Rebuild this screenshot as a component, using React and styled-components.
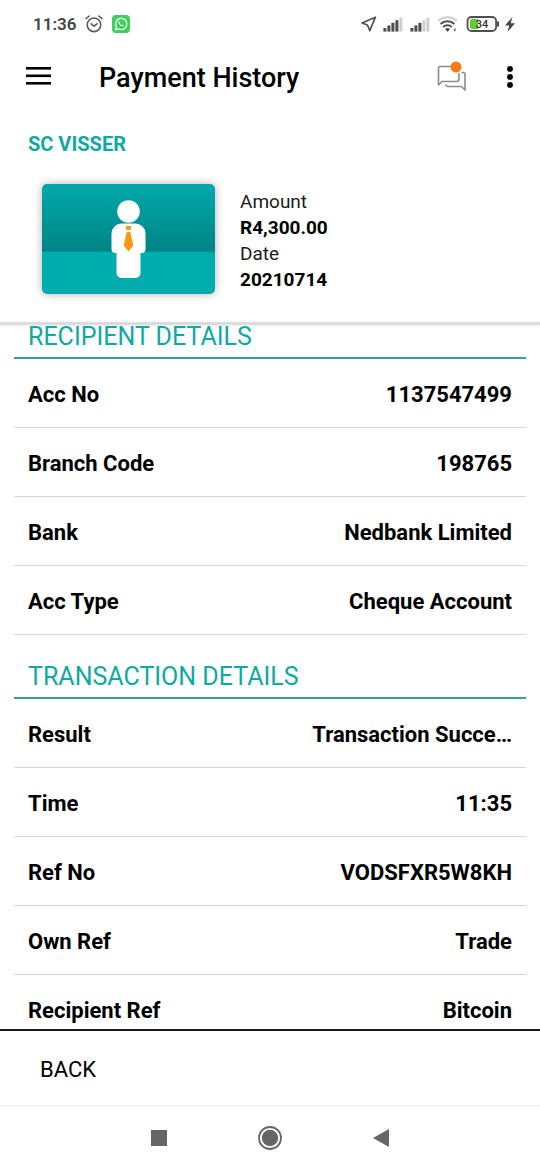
import React from "react";
import styled, { createGlobalStyle } from "styled-components";

const TEAL = "#0fa9a4";

const GlobalStyle = createGlobalStyle`
  * { box-sizing: border-box; }
  body {
    margin: 0;
    background: #fff;
    color: #000;
    font-family: Roboto, "Liberation Sans", sans-serif;
  }
  button {
    display: flex;
    align-items: center;
    margin: 0;
    padding: 0;
    border: 0;
    background: none;
    color: inherit;
    font: inherit;
  }
  svg { display: block; flex: none; }
`;

const Screen = styled.div`
  display: flex;
  flex-direction: column;
  height: 100vh;
`;

const StatusBar = styled.div`
  display: flex;
  flex: none;
  justify-content: space-between;
  align-items: center;
  height: 48px;
  padding: 0 25px 0 33px;
  color: #444;
`;

const StatusGroup = styled.div`
  display: flex;
  align-items: center;
  gap: ${(p) => p.$gap}px;
`;

const Clock = styled.span`
  font-size: 17px;
  line-height: 20px;
  font-weight: 600;
`;

const AppBar = styled.header`
  display: flex;
  flex: none;
  align-items: center;
  height: 60px;
  padding: 0 26px;
`;

const Title = styled.h1`
  flex: 1;
  margin: 0 0 0 48px;
  font-size: 27px;
  line-height: 32px;
  font-weight: 500;
`;

const BarActions = styled.div`
  display: flex;
  align-items: center;
  gap: 39px;
`;

const Summary = styled.section`
  flex: none;
  padding: 24px 28px 28px;
  box-shadow: 0 3px 0 #dcdcdc, 0 4px 3px rgba(0, 0, 0, 0.08);
`;

const RecipientName = styled.h2`
  margin: 0;
  color: ${TEAL};
  font-size: 20px;
  line-height: 24px;
  font-weight: 700;
`;

const SummaryBody = styled.div`
  display: flex;
  gap: 25px;
  margin-top: 28px;
  padding-left: 14px;
`;

const Card = styled.div`
  display: flex;
  justify-content: center;
  width: 173px;
  height: 110px;
  padding-top: 15px;
  border-radius: 5px;
  background: linear-gradient(#00a9aa, #008486 61%, #00adae 62%, #00adae);
  box-shadow: 0 0 10px rgba(0, 0, 0, 0.3);
`;

const Facts = styled.dl`
  margin: 5px 0 0;
  font-size: 19px;
  line-height: 26px;
  dt { color: #1c1c1c; }
  dd { margin: 0; font-weight: 700; }
`;

const Details = styled.main`
  flex: 1;
  min-height: 0;
  padding: 0 14px;
  overflow: hidden;
`;

const Section = styled.section`
  margin-bottom: 27px;
`;

const SectionTitle = styled.h2`
  margin: 0;
  padding: 0 14px 5px;
  border-bottom: 2px solid #2f9fa0;
  color: ${TEAL};
  font-size: 25px;
  line-height: 30px;
  font-weight: 400;
`;

const Rows = styled.dl`
  margin: 0;
`;

const Row = styled.div`
  display: flex;
  justify-content: space-between;
  align-items: center;
  height: 69px;
  padding: 4px 14px 0;
  border-bottom: 1px solid #d6d6d6;
  font-size: 22px;
  line-height: 28px;
  font-weight: 700;
  dd { margin: 0; }
`;

const Footer = styled.footer`
  display: flex;
  flex: none;
  align-items: center;
  height: 76px;
  padding: 4px 40px 0;
  border-top: 2px solid #1a1a1a;
  font-size: 22px;
  line-height: 28px;
`;

const SystemNav = styled.nav`
  display: flex;
  flex: none;
  justify-content: center;
  align-items: center;
  gap: 91px;
  height: 65px;
  border-top: 1px solid #ececec;
`;

const sections = [
  {
    title: "RECIPIENT DETAILS",
    rows: [
      ["Acc No", "1137547499"],
      ["Branch Code", "198765"],
      ["Bank", "Nedbank Limited"],
      ["Acc Type", "Cheque Account"],
    ],
  },
  {
    title: "TRANSACTION DETAILS",
    rows: [
      ["Result", "Transaction Succe…"],
      ["Time", "11:35"],
      ["Ref No", "VODSFXR5W8KH"],
      ["Own Ref", "Trade"],
      ["Recipient Ref", "Bitcoin"],
    ],
  },
];

const AlarmIcon = () => (
  <svg width="18" height="18" viewBox="0 0 18 18" fill="none" stroke="#5c5c5c" strokeWidth="1.6" strokeLinecap="round">
    <circle cx="9" cy="9.8" r="6.8" />
    <path d="M6.2 8.8 9 11.2l3-2.4M1 3.6 4.2 1M17 3.6 13.8 1" />
  </svg>
);

const WhatsAppIcon = () => (
  <svg width="18" height="18" viewBox="0 0 18 18">
    <rect width="18" height="18" rx="4" fill="#3fd05c" />
    <path d="M3.4 14.6l.9-3A5.6 5.6 0 1 1 6.5 13.8z" fill="none" stroke="#fff" strokeWidth="1.2" strokeLinejoin="round" />
    <path d="M7 5.9c-1.4 1.1-.3 3 1 4.2 1.3 1.2 3 1.9 3.9.5l-1.5-1.1-.8.7C8.7 9.8 8 9.1 7.7 8.3l.6-.8z" fill="#fff" />
  </svg>
);

const LocationIcon = () => (
  <svg width="17" height="16" viewBox="0 0 17 16" fill="none" stroke="#505050" strokeWidth="1.7" strokeLinejoin="round">
    <path d="M14.4 1.2 1 7l5.4 2 2.4 5.6z" />
  </svg>
);

const SignalIcon = ({ strength }) => (
  <svg width="22" height="15" viewBox="0 0 22 15">
    {[0, 1, 2, 3, 4].map((i) => (
      <rect key={i} x={i * 4 + 0.4} y={11 - i * 2.6} width="3" height={3.6 + i * 2.6} fill={i < strength ? "#4c4c4c" : "#cfcfcf"} />
    ))}
  </svg>
);

const WifiIcon = () => (
  <svg width="24" height="16" viewBox="0 0 24 16" fill="none" strokeWidth="2">
    <path d="M1 5a14 14 0 0 1 19 0" stroke="#cfcfcf" />
    <path d="M3.6 8a10 10 0 0 1 13.8 0M6.2 11a6.3 6.3 0 0 1 8.6 0" stroke="#4c4c4c" />
    <path d="M8 13.3a3.6 3.6 0 0 1 5 0l-2.5 2.5z" fill="#4c4c4c" />
    <path d="M18.5 12v3.5l-2-1.75z" fill="#4c4c4c" />
  </svg>
);

const BatteryIcon = () => (
  <svg width="34" height="16" viewBox="0 0 34 16">
    <rect x="1.5" y="1" width="28.6" height="14" rx="4" fill="#fff" stroke="#505050" strokeWidth="1.8" />
    <path d="M6 3h6v10H6a2 2 0 0 1-2-2V5a2 2 0 0 1 2-2z" fill="#5fcf2e" />
    <path d="M32 5.5v5" stroke="#505050" strokeWidth="2" />
    <text x="16" y="12" textAnchor="middle" fontSize="11" fontWeight="500" fill="#333">34</text>
  </svg>
);

const BoltIcon = () => (
  <svg width="10" height="15" viewBox="0 0 10 15" fill="#444">
    <path d="M7.5 0 0 8.6h4.2L2.5 15 10 6.2H5.7z" />
  </svg>
);

const MenuIcon = () => (
  <svg width="25" height="22" viewBox="0 0 25 22" fill="#000">
    <rect width="25" height="2.6" y="0" />
    <rect width="25" height="2.6" y="7.5" />
    <rect width="25" height="2.6" y="15" />
  </svg>
);

const MessagesIcon = () => (
  <svg width="30" height="38" viewBox="0 0 30 38" fill="none" stroke="#8c8c8c" strokeWidth="1.6" strokeLinejoin="round">
    <path d="M14 7.5H3.5a2 2 0 0 0-2 2V26l3.500-3.500h14.500a2.500 2.500 0 0 0 2.500-2.500v-6" />
    <path d="M24.500 13.500h1.500a2 2 0 0 1 2 2V31l-3.500-3.500H11a2 2 0 0 1-2-2" />
    <circle cx="19" cy="8" r="5.500" fill="#f47b16" stroke="none" />
  </svg>
);

const MoreIcon = () => (
  <svg width="8" height="24" viewBox="0 0 8 24" fill="#000">
    <circle cx="4" cy="2.900" r="2.900" />
    <circle cx="4" cy="10.900" r="2.900" />
    <circle cx="4" cy="18.900" r="2.900" />
  </svg>
);

const PersonIcon = () => (
  <svg width="36" height="80" viewBox="0 0 36 80">
    <g fill="#fff">
      <circle cx="17.500" cy="12.500" r="11.300" />
      <path d="M10.500 24.500h14a10 10 0 0 1 10 10V50a4 4 0 0 1-4 4h-1v20a5 5 0 0 1-5 5H10.500a5 5 0 0 1-5-5V54h-1a4 4 0 0 1-4-4V34.500a10 10 0 0 1 10-10z" />
    </g>
    <path d="M14.500 27h6l-1 4h-4zM15.700 33h3.600l3 13.500-4.800 6-4.800-6z" fill="#f79a0c" />
  </svg>
);

export default function App() {
  return (
    <Screen>
      <GlobalStyle />
      <StatusBar>
        <StatusGroup $gap={9}>
          <Clock>11:36</Clock>
          <AlarmIcon />
          <WhatsAppIcon />
        </StatusGroup>
        <StatusGroup $gap={5}>
          <LocationIcon />
          <SignalIcon strength={4} />
          <SignalIcon strength={3} />
          <WifiIcon />
          <BatteryIcon />
          <BoltIcon />
        </StatusGroup>
      </StatusBar>
      <AppBar>
        <button type="button" aria-label="Menu"><MenuIcon /></button>
        <Title>Payment History</Title>
        <BarActions>
          <button type="button" aria-label="Messages"><MessagesIcon /></button>
          <button type="button" aria-label="More options"><MoreIcon /></button>
        </BarActions>
      </AppBar>
      <Summary>
        <RecipientName>SC VISSER</RecipientName>
        <SummaryBody>
          <Card><PersonIcon /></Card>
          <Facts>
            <dt>Amount</dt>
            <dd>R4,300.00</dd>
            <dt>Date</dt>
            <dd>20210714</dd>
          </Facts>
        </SummaryBody>
      </Summary>
      <Details>
        {sections.map((section) => (
          <Section key={section.title}>
            <SectionTitle>{section.title}</SectionTitle>
            <Rows>
              {section.rows.map(([label, value]) => (
                <Row key={label}>
                  <dt>{label}</dt>
                  <dd>{value}</dd>
                </Row>
              ))}
            </Rows>
          </Section>
        ))}
      </Details>
      <Footer>
        <button type="button">BACK</button>
      </Footer>
      <SystemNav>
        <button type="button" aria-label="Recent apps">
          <svg width="16" height="16" viewBox="0 0 16 16"><path d="M0 0h16v16H0z" fill="#666" /></svg>
        </button>
        <button type="button" aria-label="Home">
          <svg width="24" height="24" viewBox="0 0 24 24">
            <circle cx="12" cy="12" r="11" fill="none" stroke="#666" strokeWidth="1.8" />
            <circle cx="12" cy="12" r="8.2" fill="#666" />
          </svg>
        </button>
        <button type="button" aria-label="Back">
          <svg width="16" height="18" viewBox="0 0 16 18"><path d="M16 0v18L0 9z" fill="#666" /></svg>
        </button>
      </SystemNav>
    </Screen>
  );
}
